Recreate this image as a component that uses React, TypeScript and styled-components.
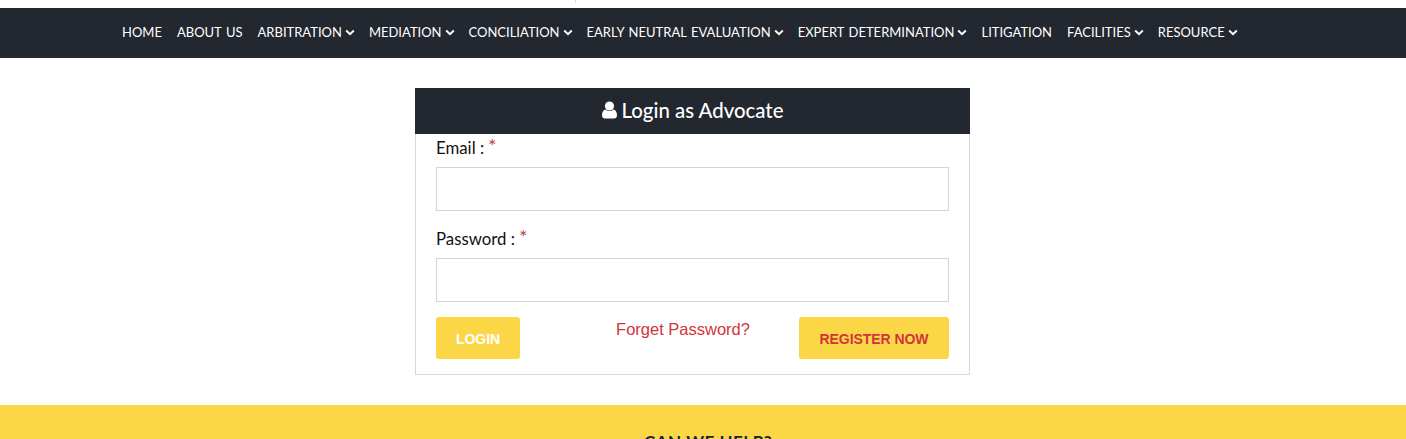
import React from "react";
import styled, { createGlobalStyle } from "styled-components";

const Global = createGlobalStyle`
  html, body { margin: 0; padding: 0; background: #fff; overflow: hidden; }
  body { font-family: "Lato", "Liberation Sans", sans-serif; height: 439px; }
  * { box-sizing: border-box; }
`;
const Page = styled.div`display:flex;flex-direction:column;height:439px;overflow:hidden;`;
const TopStrip = styled.div`flex:none;height:8px;padding-left:575px;`;
const Tick = styled.div`width:1px;height:3px;background:#ddd;`;
const Nav = styled.nav`
  flex:none;height:50px;background:#23272f;display:flex;align-items:center;gap:15px;padding:0 0 2px 122px;
`;
const NavItem = styled.a`
  display:flex;align-items:center;gap:3px;color:#fff;font:400 13px "Lato","Liberation Sans",sans-serif;
  word-spacing:1.2px;white-space:nowrap;
`;
const ChevronSvg = styled.svg`flex:none;margin-right:-1px;`;
const Main = styled.main`flex:none;display:flex;justify-content:center;padding-top:30px;padding-right:21px;`;
const Card = styled.section`width:555px;height:287px;display:flex;flex-direction:column;border:1px solid #d9d9d9;border-top:0;`;
const CardHead = styled.h2`
  margin:0 -1px;height:46px;background:#23272f;color:#fff;display:flex;align-items:center;justify-content:center;gap:5px;padding-bottom:2px;
  font:500 20.4px "Lato","Liberation Sans",sans-serif;
`;
const Form = styled.form`display:flex;flex-direction:column;padding:0 20px;`;
const Label = styled.label`
  height:33px;display:flex;align-items:flex-start;padding-top:5px;font:400 16.8px/18px "Lato","Liberation Sans",sans-serif;color:#111;
`;
const Star = styled.span`color:#b8474a;font-size:20px;margin-left:4px;line-height:18px;margin-top:-3px;`;
const Input = styled.input`display:block;width:100%;height:44px;border:1px solid #d4d4d4;background:#fff;margin-bottom:14px;`;
const Actions = styled.div`display:flex;justify-content:space-between;align-items:flex-start;margin-top:1px;`;
const Btn = styled.button<{ $w: number; $c: string }>`
  width:${p=>p.$w}px;height:42px;border:0;border-radius:3px;background:#fbd748;color:${p=>p.$c};
  font:700 14px "Liberation Sans",sans-serif;padding:2px 0 0;letter-spacing:-0.05px;
`;
const Forget = styled.a`color:#d2343b;font:400 16.5px/24px "Liberation Sans",sans-serif;margin-top:0;margin-left:47px;`;
const Footer = styled.footer`
  margin-top:30px;flex:1;background:#fbd748;display:flex;justify-content:center;padding:27px 0 0 10px;
`;
const FooterTitle = styled.h3`margin:0;font:700 17px/20px "Lato","Liberation Sans",sans-serif;color:#1b2230;letter-spacing:.5px;`;

const Chevron = () => (
  <ChevronSvg width="10" height="7" viewBox="0 0 10 7" fill="none"><path d="M1.2 1.5 5 5.2 8.8 1.5" stroke="#fff" strokeWidth="1.9"/></ChevronSvg>
);
const UserIcon = () => (
  <svg width="15" height="18" viewBox="0 0 15 18" fill="#fff"><circle cx="7.5" cy="5" r="4.6"/><path d="M0 14.2C0 11 1.6 9 3.5 8.6 5.9 10.6 9.1 10.6 11.5 8.6 13.4 9 15 11 15 14.2 15 16.4 13.7 17.5 12 17.5H3C1.3 17.5 0 16.4 0 14.2Z"/></svg>
);
const items: [string, boolean][] = [
  ["HOME", false],["ABOUT US", false],["ARBITRATION", true],["MEDIATION", true],["CONCILIATION", true],
  ["EARLY NEUTRAL EVALUATION", true],["EXPERT DETERMINATION", true],["LITIGATION", false],["FACILITIES", true],["RESOURCE", true],
];

export default function App() {
  return (
    <Page>
      <Global />
      <TopStrip><Tick /></TopStrip>
      <Nav>
        {items.map(([t, c]) => <NavItem key={t}>{t}{c && <Chevron />}</NavItem>)}
      </Nav>
      <Main>
        <Card>
          <CardHead><UserIcon />Login as Advocate</CardHead>
          <Form>
            <Label>Email :<Star>*</Star></Label>
            <Input />
            <Label>Password :<Star>*</Star></Label>
            <Input />
            <Actions>
              <Btn $w={84} $c="#fff" type="button">LOGIN</Btn>
              <Forget>Forget Password?</Forget>
              <Btn $w={150} $c="#d2343b" type="button">REGISTER NOW</Btn>
            </Actions>
          </Form>
        </Card>
      </Main>
      <Footer><FooterTitle>CAN WE HELP?</FooterTitle></Footer>
    </Page>
  );
}
